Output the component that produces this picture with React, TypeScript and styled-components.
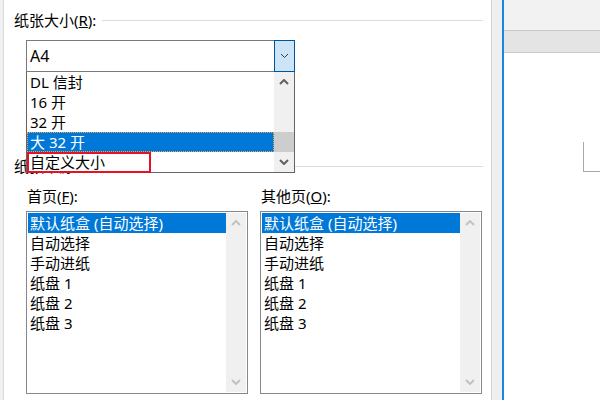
import React from 'react';
import styled, { createGlobalStyle } from 'styled-components';

const GlobalStyle = createGlobalStyle`
  html, body {
    margin: 0;
    padding: 0;
    width: 600px;
    height: 400px;
    overflow: hidden;
    background: #ffffff;
  }
  body {
    font-family: "Noto Sans", "Noto Sans CJK SC", sans-serif;
    font-size: 15px;
    color: #000000;
  }
`;

const paperSizes = ['DL 信封', '16 开', '32 开', '大 32 开', '自定义大小'];
const trays = ['默认纸盒 (自动选择)', '自动选择', '手动进纸', '纸盘 1', '纸盘 2', '纸盘 3'];

const Chevron: React.FC<{ dir: 'up' | 'down'; color: string; w?: number; stroke?: number }> = ({
    dir,
    color,
    w = 10,
    stroke = 2,
}) => {
    const h = w / 2 + 1;
    const pts = dir === 'down'
        ? `1,1 ${w / 2},${h - 1} ${w - 1},1`
        : `1,${h - 1} ${w / 2},1 ${w - 1},${h - 1}`;
    return (
        <svg width={w} height={h} viewBox={`0 0 ${w} ${h}`}>
            <polyline points={pts} fill="none" stroke={color} strokeWidth={stroke} />
        </svg>
    );
};

const App: React.FC = () => {
    return (
        <Page>
            <GlobalStyle/>
            <LeftGutter/>
            <Dialog>
                <SectionHeader>
                    <span>纸张大小(<u>R</u>):</span>
                    <Rule/>
                </SectionHeader>
                <ComboWrap>
                    <Combo>
                        <ComboField>A4</ComboField>
                        <ComboButton>
                            <Chevron dir="down" color="#3c3c3c" w={9} stroke={1}/>
                        </ComboButton>
                    </Combo>
                    <Popup>
                        <PopupItems>
                            {paperSizes.map((s, i) => (
                                <PopupRow key={s} $selected={i === 3}>
                                    {s}
                                    {i === 4 && <Marker/>}
                                </PopupRow>
                            ))}
                        </PopupItems>
                        <ScrollBar>
                            <ArrowCell>
                                <Chevron dir="up" color="#606060"/>
                            </ArrowCell>
                            <Track $pad={40}>
                                <Thumb/>
                            </Track>
                            <ArrowCell>
                                <Chevron dir="down" color="#606060"/>
                            </ArrowCell>
                        </ScrollBar>
                    </Popup>
                </ComboWrap>
                <SectionHeader $top={84}>
                    <span>纸张来源</span>
                    <Rule/>
                </SectionHeader>
                <Columns>
                    <Column>
                        <FieldLabel>首页(<u>F</u>):</FieldLabel>
                        <ListBox>
                            <ListItems>
                                {trays.map((t, i) => (
                                    <ListRow key={t} $selected={i === 0}>{t}</ListRow>
                                ))}
                            </ListItems>
                            <ScrollBar $disabled>
                                <ArrowCell>
                                    <Chevron dir="up" color="#c2c2c2"/>
                                </ArrowCell>
                                <Track/>
                                <ArrowCell>
                                    <Chevron dir="down" color="#c2c2c2"/>
                                </ArrowCell>
                            </ScrollBar>
                        </ListBox>
                    </Column>
                    <Column>
                        <FieldLabel>其他页(<u>O</u>):</FieldLabel>
                        <ListBox>
                            <ListItems>
                                {trays.map((t, i) => (
                                    <ListRow key={t} $selected={i === 0}>{t}</ListRow>
                                ))}
                            </ListItems>
                            <ScrollBar $disabled>
                                <ArrowCell>
                                    <Chevron dir="up" color="#c2c2c2"/>
                                </ArrowCell>
                                <Track/>
                                <ArrowCell>
                                    <Chevron dir="down" color="#c2c2c2"/>
                                </ArrowCell>
                            </ScrollBar>
                        </ListBox>
                    </Column>
                </Columns>
            </Dialog>
            <DialogGutter/>
            <FocusLine/>
            <Preview>
                <TopBand/>
                <SubBand/>
                <PreviewBody>
                    <PageCorner/>
                </PreviewBody>
            </Preview>
        </Page>
    );
};

const Page = styled.div`
  display: flex;
  width: 600px;
  height: 400px;
`;

const LeftGutter = styled.div`
  width: 3px;
  background: #f0f0f0;
  border-right: 1px solid #d9d9d9;
`;

const Dialog = styled.div`
  width: 487px;
  background: #ffffff;
  padding: 10px 8px 0 10px;
  box-sizing: border-box;
  display: flex;
  flex-direction: column;
`;

const SectionHeader = styled.div<{ $top?: number }>`
  display: flex;
  align-items: center;
  gap: 6px;
  height: 20px;
  line-height: 20px;
  margin-top: ${(p) => p.$top ?? 0}px;
  white-space: nowrap;
`;

const Rule = styled.div`
  flex: 1;
  height: 1px;
  background: #dcdcdc;
`;

const ComboWrap = styled.div`
  position: relative;
  margin: 10px 0 0 12px;
  width: 269px;
  z-index: 2;
`;

const Combo = styled.div`
  display: flex;
  height: 32px;
`;

const ComboField = styled.div`
  flex: 1;
  border: 1px solid #7a7a7a;
  border-right: none;
  padding-left: 3px;
  display: flex;
  align-items: center;
  font-size: 16px;
`;

const ComboButton = styled.div`
  width: 21px;
  box-sizing: border-box;
  border: 1px solid #005499;
  background: #cce4f7;
  display: flex;
  align-items: center;
  justify-content: center;
`;

const Popup = styled.div`
  position: absolute;
  top: 32px;
  left: 0;
  width: 269px;
  box-sizing: border-box;
  display: flex;
  background: #ffffff;
  border: 1px solid #646464;
  border-top: none;
`;

const PopupItems = styled.div`
  flex: 1;
`;

const PopupRow = styled.div<{ $selected?: boolean }>`
  position: relative;
  height: 20px;
  line-height: 20px;
  padding-left: 3px;
  white-space: nowrap;
  background: ${(p) => (p.$selected ? '#0078d7' : 'transparent')};
  color: ${(p) => (p.$selected ? '#ffffff' : '#000000')};
  outline: ${(p) => (p.$selected ? '1px dotted #f7a440' : 'none')};
  outline-offset: -1px;
`;

const Marker = styled.div`
  position: absolute;
  left: 0;
  top: 0;
  width: 124px;
  height: 21px;
  box-sizing: border-box;
  border: 2px solid #e81123;
`;

const ScrollBar = styled.div<{ $disabled?: boolean }>`
  width: 20px;
  background: #f0f0f0;
  display: flex;
  flex-direction: column;
`;

const ArrowCell = styled.div`
  height: 20px;
  display: flex;
  align-items: center;
  justify-content: center;
`;

const Track = styled.div<{ $pad?: number }>`
  flex: 1;
  padding-top: ${(p) => p.$pad ?? 0}px;
`;

const Thumb = styled.div`
  height: 20px;
  background: #cdcdcd;
`;

const Columns = styled.div`
  display: grid;
  grid-template-columns: 222px 222px;
  column-gap: 12px;
  margin: 10px 0 0 12px;
`;

const Column = styled.div`
  display: flex;
  flex-direction: column;
`;

const FieldLabel = styled.div`
  height: 20px;
  line-height: 20px;
  padding-left: 1px;
  margin-bottom: 5px;
  white-space: nowrap;
`;

const ListBox = styled.div`
  height: 183px;
  box-sizing: border-box;
  border: 1px solid #828790;
  padding: 1px;
  display: flex;
  background: #ffffff;
`;

const ListItems = styled.div`
  flex: 1;
`;

const ListRow = styled.div<{ $selected?: boolean }>`
  height: 20px;
  line-height: 20px;
  padding-left: 2px;
  white-space: nowrap;
  background: ${(p) => (p.$selected ? '#0078d7' : 'transparent')};
  color: ${(p) => (p.$selected ? '#ffffff' : '#000000')};
`;

const DialogGutter = styled.div`
  width: 10px;
  background: #efefef;
  border-left: 1px solid #d4d4d4;
`;

const FocusLine = styled.div`
  width: 2px;
  background: #1a86e0;
`;

const Preview = styled.div`
  flex: 1;
  display: flex;
  flex-direction: column;
`;

const TopBand = styled.div`
  height: 30px;
  background: #f2f2f2;
  border-bottom: 1px solid #c8c8c8;
`;

const SubBand = styled.div`
  height: 21px;
  background: #e4e4e4;
  border-bottom: 1px solid #c8c8c8;
`;

const PreviewBody = styled.div`
  flex: 1;
  background: #ffffff;
  display: flex;
  flex-direction: column;
`;

const PageCorner = styled.div`
  margin: 89px 0 0 79px;
  height: 29px;
  border-left: 1px solid #a8a8a8;
  border-bottom: 1px solid #a8a8a8;
`;

export default App;
